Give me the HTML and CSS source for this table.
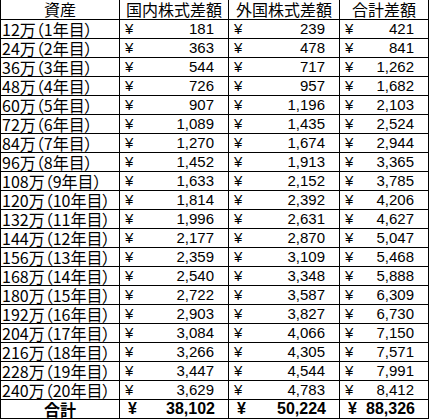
FILE: index.html
```html
<!DOCTYPE html>
<html lang="ja">
<head>
<meta charset="utf-8">
<link rel="stylesheet" href="styles.css">
</head>
<body>
<div class="sheet">
  <div class="cell head">資産</div><div class="cell head">国内株式差額</div><div class="cell head">外国株式差額</div><div class="cell head">合計差額</div>

  <div class="cell label">12万（1年目）</div><div class="cell money"><span>¥</span><span>181</span></div><div class="cell money"><span>¥</span><span>239</span></div><div class="cell money"><span>¥</span><span>421</span></div>
  <div class="cell label">24万（2年目）</div><div class="cell money"><span>¥</span><span>363</span></div><div class="cell money"><span>¥</span><span>478</span></div><div class="cell money"><span>¥</span><span>841</span></div>
  <div class="cell label">36万（3年目）</div><div class="cell money"><span>¥</span><span>544</span></div><div class="cell money"><span>¥</span><span>717</span></div><div class="cell money"><span>¥</span><span>1,262</span></div>
  <div class="cell label">48万（4年目）</div><div class="cell money"><span>¥</span><span>726</span></div><div class="cell money"><span>¥</span><span>957</span></div><div class="cell money"><span>¥</span><span>1,682</span></div>
  <div class="cell label">60万（5年目）</div><div class="cell money"><span>¥</span><span>907</span></div><div class="cell money"><span>¥</span><span>1,196</span></div><div class="cell money"><span>¥</span><span>2,103</span></div>
  <div class="cell label">72万（6年目）</div><div class="cell money"><span>¥</span><span>1,089</span></div><div class="cell money"><span>¥</span><span>1,435</span></div><div class="cell money"><span>¥</span><span>2,524</span></div>
  <div class="cell label">84万（7年目）</div><div class="cell money"><span>¥</span><span>1,270</span></div><div class="cell money"><span>¥</span><span>1,674</span></div><div class="cell money"><span>¥</span><span>2,944</span></div>
  <div class="cell label">96万（8年目）</div><div class="cell money"><span>¥</span><span>1,452</span></div><div class="cell money"><span>¥</span><span>1,913</span></div><div class="cell money"><span>¥</span><span>3,365</span></div>
  <div class="cell label">108万（9年目）</div><div class="cell money"><span>¥</span><span>1,633</span></div><div class="cell money"><span>¥</span><span>2,152</span></div><div class="cell money"><span>¥</span><span>3,785</span></div>
  <div class="cell label">120万（10年目）</div><div class="cell money"><span>¥</span><span>1,814</span></div><div class="cell money"><span>¥</span><span>2,392</span></div><div class="cell money"><span>¥</span><span>4,206</span></div>
  <div class="cell label">132万（11年目）</div><div class="cell money"><span>¥</span><span>1,996</span></div><div class="cell money"><span>¥</span><span>2,631</span></div><div class="cell money"><span>¥</span><span>4,627</span></div>
  <div class="cell label">144万（12年目）</div><div class="cell money"><span>¥</span><span>2,177</span></div><div class="cell money"><span>¥</span><span>2,870</span></div><div class="cell money"><span>¥</span><span>5,047</span></div>
  <div class="cell label">156万（13年目）</div><div class="cell money"><span>¥</span><span>2,359</span></div><div class="cell money"><span>¥</span><span>3,109</span></div><div class="cell money"><span>¥</span><span>5,468</span></div>
  <div class="cell label">168万（14年目）</div><div class="cell money"><span>¥</span><span>2,540</span></div><div class="cell money"><span>¥</span><span>3,348</span></div><div class="cell money"><span>¥</span><span>5,888</span></div>
  <div class="cell label">180万（15年目）</div><div class="cell money"><span>¥</span><span>2,722</span></div><div class="cell money"><span>¥</span><span>3,587</span></div><div class="cell money"><span>¥</span><span>6,309</span></div>
  <div class="cell label">192万（16年目）</div><div class="cell money"><span>¥</span><span>2,903</span></div><div class="cell money"><span>¥</span><span>3,827</span></div><div class="cell money"><span>¥</span><span>6,730</span></div>
  <div class="cell label">204万（17年目）</div><div class="cell money"><span>¥</span><span>3,084</span></div><div class="cell money"><span>¥</span><span>4,066</span></div><div class="cell money"><span>¥</span><span>7,150</span></div>
  <div class="cell label">216万（18年目）</div><div class="cell money"><span>¥</span><span>3,266</span></div><div class="cell money"><span>¥</span><span>4,305</span></div><div class="cell money"><span>¥</span><span>7,571</span></div>
  <div class="cell label">228万（19年目）</div><div class="cell money"><span>¥</span><span>3,447</span></div><div class="cell money"><span>¥</span><span>4,544</span></div><div class="cell money"><span>¥</span><span>7,991</span></div>
  <div class="cell label">240万（20年目）</div><div class="cell money"><span>¥</span><span>3,629</span></div><div class="cell money"><span>¥</span><span>4,783</span></div><div class="cell money"><span>¥</span><span>8,412</span></div>

  <div class="cell total-label">合計</div><div class="cell money total"><span>¥</span><span>38,102</span></div><div class="cell money total"><span>¥</span><span>50,224</span></div><div class="cell money total"><span>¥</span><span>88,326</span></div>
</div>
</body>
</html>
```

FILE: styles.css
```css
html, body {
  margin: 0;
  padding: 0;
  background: #ffffff;
}

.sheet {
  display: grid;
  grid-template-columns: 118px 108px 110px 88px;
  grid-template-rows: 19px repeat(21, 18px);
  gap: 1px;
  padding: 0 1px 1px 1px;
  background: #000000;
  width: 427px;
  font-family: "Noto Sans CJK JP", "Liberation Sans", sans-serif;
  font-feature-settings: "palt";
  font-size: 15px;
  color: #000000;
}

.cell {
  background: #ffffff;
  line-height: 18px;
  white-space: nowrap;
}

.head {
  text-align: center;
  font-size: 16px;
  line-height: 19px;
}

.label {
  padding-left: 1px;
  font-size: 16px;
}

.money {
  display: flex;
  justify-content: space-between;
  padding: 0 14px 0 5px;
  font-family: "Liberation Sans", "Noto Sans CJK JP", sans-serif;
}

.total {
  font-weight: bold;
  font-size: 16px;
  padding-right: 13px;
  padding-left: 8px;
}

.total-label {
  text-align: center;
  font-weight: bold;
  font-size: 16px;
}
```
